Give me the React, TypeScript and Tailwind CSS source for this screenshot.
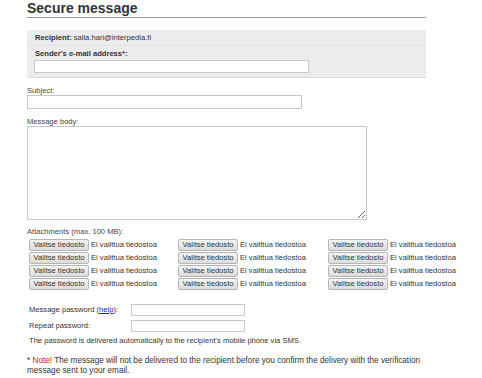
import React from "react";

function FileCell() {
  return (
    <div className="flex items-center h-[12px]">
      <button className="w-[60px] h-[12px] shrink-0 border border-[#b5b5b5] rounded-[2px] bg-gradient-to-b from-[#f4f4f4] to-[#dcdcdc] text-[7.6px] leading-[10px] text-[#333] p-0">
        Valitse tiedosto
      </button>
      <span className="ml-[2px] whitespace-nowrap">Ei valittua tiedostoa</span>
    </div>
  );
}

export default function App() {
  const rows = [0, 1, 2, 3];
  return (
    <div className="w-[482px] h-[378px] bg-white overflow-hidden">
      <div className="ml-[27px] w-[399px] font-['Liberation_Sans',Arial,sans-serif] text-[7.6px] leading-[10px] text-[#333]">
        <h1 className="text-[14px] font-bold leading-[17px] text-[#333] border-b border-[#9a9a9a]">
          Secure message
        </h1>

        <div className="mt-[12px] bg-[#ececec] border-b border-[#dcdcdc]">
          <div className="h-[16px] px-[8px] flex items-center border-b border-[#e2e2e2]">
            <span className="font-bold">Recipient:</span>
            <span className="ml-[2px]">salla.hari@interpedia.fi</span>
          </div>
          <div className="px-[7px] pt-[3px] pb-[4px]">
            <div className="font-bold leading-[10px] pl-[1px]">Sender's e-mail address*:</div>
            <input className="block mt-[1px] w-[275px] h-[13px] bg-white border border-[#c8c8c8] outline-none" />
          </div>
        </div>

        <div className="mt-[9px] leading-[8px] text-[#444]">Subject:</div>
        <input className="block w-[275px] h-[14px] bg-white border border-[#c8c8c8] outline-none" />

        <div className="mt-[9px] leading-[8px] text-[#444]">Message body:</div>
        <textarea className="block w-[340px] h-[94px] bg-white border border-[#c8c8c8] outline-none" />

        <div className="mt-[8px] leading-[8px] text-[#444]">Attachments (max. 100 MB):</div>
        <div className="mt-[3px] ml-[2px] grid grid-cols-[149px_150px_100px] gap-y-[1px]">
          {rows.map((r) => (
            <React.Fragment key={r}>
              <FileCell />
              <FileCell />
              <FileCell />
            </React.Fragment>
          ))}
        </div>

        <div className="mt-[12px] ml-[2px]">
          <div className="flex items-center h-[16px]">
            <span className="w-[102px] shrink-0">
              Message password (<a href="#" className="text-[#2222cc] underline">help</a>):
            </span>
            <input className="w-[114px] h-[12px] bg-white border border-[#c8c8c8] outline-none" />
          </div>
          <div className="flex items-center h-[16px]">
            <span className="w-[102px] shrink-0">Repeat password:</span>
            <input className="w-[114px] h-[12px] bg-white border border-[#c8c8c8] outline-none" />
          </div>
          <div className="mt-[2px] leading-[10px]">
            The password is delivered automatically to the recipient's mobile phone via SMS.
          </div>
        </div>

        <div className="mt-[10px] leading-[10px] text-[8.2px] whitespace-nowrap">
          * <span className="text-[#e01010]">Note!</span> The message will not be delivered to the recipient before you confirm the delivery with the verification
          <br />
          message sent to your email.
        </div>
      </div>
    </div>
  );
}
